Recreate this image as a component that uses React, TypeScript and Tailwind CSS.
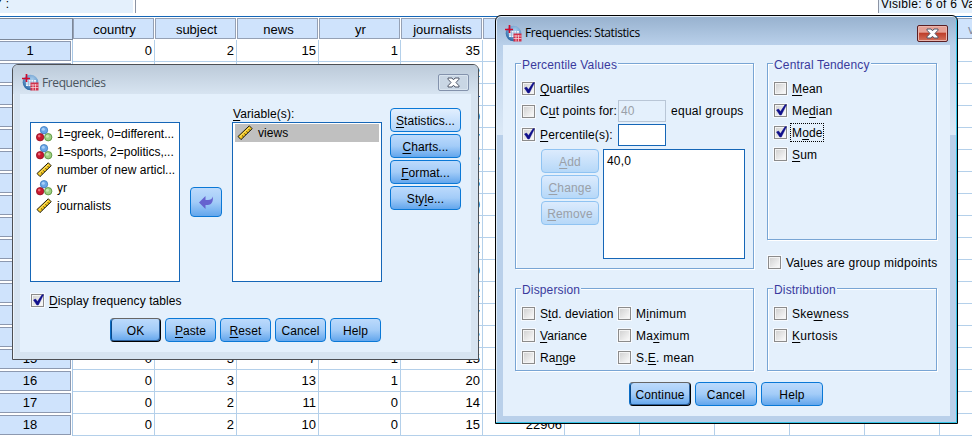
import React from "react";

/** Text with an "&" in front of its access key. */
function Mnemonic({ text }: { text: string }) {
  const at = text.indexOf("&");
  if (at < 0) return <>{text}</>;
  return (
    <>
      {text.slice(0, at)}
      <span className="underline decoration-1 underline-offset-2 [text-decoration-skip-ink:none]">{text[at + 1]}</span>
      {text.slice(at + 2)}
    </>
  );
}

function AppIcon() {
  return (
    <svg width="17" height="17" viewBox="0 0 17 17" className="block shrink-0">
      <defs>
        <radialGradient id="globe" cx="0.6" cy="0.3" r="0.75">
          <stop offset="0" stopColor="#a9cdec" />
          <stop offset="0.6" stopColor="#6598cb" />
          <stop offset="1" stopColor="#1f5d9c" />
        </radialGradient>
      </defs>
      <circle cx="8.500" cy="8.500" r="7.800" fill="url(#globe)" />
      <path d="M4 6h10v6H4z" fill="#eef5fc" />
      <path d="M4 8h10M4 10h10M6.500 6v6M9 6v6M11.500 6v6" stroke="#7fa6d0" strokeWidth="0.6" />
      <path d="M0 4.500h8M4.500 0v8" stroke="#cf0a2c" strokeWidth="1.700" />
      <path d="M8.500 8.500h8v8h-8z" fill="#d1304a" />
      <path d="M8.500 11h8M8.500 13.500h8M11 10v6.500M13.500 10v6.500" stroke="#fbe3e6" strokeWidth="0.7" />
    </svg>
  );
}

function NominalIcon() {
  return (
    <svg width="17" height="16" viewBox="0 0 17 16" className="block shrink-0">
      <circle cx="8" cy="4.2" r="3.7" fill="#6aa7e8" stroke="#3b78bd" strokeWidth="0.8" />
      <circle cx="7.3" cy="3.2" r="1.5" fill="#a9d0f8" />
      <circle cx="4.1" cy="11.2" r="3.7" fill="#c8192f" stroke="#8f1022" strokeWidth="0.8" />
      <circle cx="3.2" cy="10.1" r="1.3" fill="#ec6a78" />
      <circle cx="12.2" cy="11.2" r="3.7" fill="#9fd080" stroke="#4e8a35" strokeWidth="0.8" />
      <circle cx="11.4" cy="10.2" r="1.5" fill="#c9ecb2" />
    </svg>
  );
}

function ScaleIcon() {
  return (
    <svg width="17" height="16" viewBox="0 0 17 16" className="block shrink-0">
      <path d="M1 11.5 12.300 .8l2.900 2.900L4 14.600z" fill="#f5c61a" stroke="#1c1a10" strokeWidth="1" />
      <path d="M2.800 11.600l9.700-9.200" stroke="#fbe88a" strokeWidth="0.9" />
      <path d="M5.200 10.600l1.300 1.300M7.400 8.500l1.300 1.300M9.600 6.400l1.300 1.300M11.800 4.300l1.300 1.300" stroke="#1c1a10" strokeWidth="0.9" />
    </svg>
  );
}

function CloseButton({ active }: { active?: boolean }) {
  return (
    <div
      className={
        active
          ? "flex h-[17px] w-[31px] shrink-0 items-center justify-center rounded-[2px] border border-[#5a1f24] bg-linear-to-b from-[#e5a095] from-40% via-[#bf3f2b] via-50% to-[#d2705b] shadow-[inset_0_0_0_1px_#eab5ad]"
          : "flex h-[17px] w-[31px] shrink-0 items-center justify-center rounded-[2px] border border-[#8392ac] bg-[#c9d6e4] shadow-[inset_0_0_0_1px_#d9e4ef]"
      }
    >
      <svg width="13" height="11" viewBox="0 0 13 11" className="block">
        <path d="M1 1h4l1.500 1.800L8 1h4v1.200L9 5.500l3 3.300V10H8L6.500 8.200 5 10H1V8.800l3-3.300-3-3.300z" fill="#fff" stroke="#4f5769" strokeWidth="1" />
      </svg>
    </div>
  );
}

function PushButton({ label, width, variant = "normal" }: { label: string; width: string; variant?: "normal" | "light" | "focus" | "disabled" }) {
  const look = {
    normal: "border-[#0a78d6] bg-linear-to-b from-[#bcdafc] via-[#a3ccf8] to-[#62a6ec] text-black",
    light: "border-[#0a78d6] bg-linear-to-b from-[#e2effe] to-[#b2d5fa] text-black",
    focus:
      "border-t-[#666] border-l-[#0a6cc4] border-r-black border-b-black bg-linear-to-b from-[#bcdafc] via-[#a3ccf8] to-[#62a6ec] text-black shadow-[inset_-1px_-1px_0_#2b5f9a,inset_1px_0_0_#0a4a8a]",
    disabled: "border-[#8fc3f2] bg-linear-to-b from-[#dcebfd] to-[#b6d8f8] text-[#9aa0a8]",
  }[variant];
  return (
    <div className={`flex h-6 shrink-0 items-center justify-center rounded-[4px] border pt-px whitespace-pre ${width} ${look}`}>
      <span>
        <Mnemonic text={label} />
      </span>
    </div>
  );
}

function CheckBox({ label, checked, focused }: { label: string; checked?: boolean; focused?: boolean }) {
  return (
    <div className="flex h-[13px] items-center gap-[3px] whitespace-pre">
      <span className="size-[13px] shrink-0 border border-[#8b8b8b] bg-linear-to-br from-[#cfcfcf] to-[#fdfdfd] shadow-[inset_0_0_0_1px_#f4f4f4,0_0_0_1px_#f6faff]">
        {checked && (
          <svg width="12" height="12" viewBox="0 0 12 12" className="-mt-px block">
            <path d="M1.500 6 3.500 5l2 2.600L10 .8h1.500L6.300 11H4.800z" fill="#10108c" stroke="#10108c" strokeWidth="0.5" />
          </svg>
        )}
      </span>
      <span className={focused ? "h-[19px] border border-dotted border-black pl-px leading-[18px]" : "pl-0.5 leading-[18px]"}>
        <Mnemonic text={label} />
      </span>
    </div>
  );
}

function Group({ title, size, children }: { title: string; size: string; children: React.ReactNode }) {
  return (
    <section className={`shrink-0 border border-[#78a5d4] shadow-[1px_1px_0_#fff,inset_1px_1px_0_#fff] ${size}`}>
      <h2 className="-mt-[9px] ml-[5px] h-5 w-fit bg-[#e4f0fc] px-px leading-5 whitespace-pre text-[#3a3a9c]">{title}</h2>
      {children}
    </section>
  );
}

const columns = ["country", "subject", "news", "yr", "journalists", "views"];
const extraColumns = ["var", "var", "var", "var", "var", "var"];
const rows: string[][] = [
  ["0", "2", "15", "1", "35", "30112"],
  ["0", "1", "12", "1", "22", ""],
  ["0", "1", "14", "0", "24", ""],
  ["0", "3", "11", "1", "20", ""],
  ["0", "2", "10", "0", "17", ""],
  ["0", "2", "9", "1", "22", ""],
  ["0", "1", "8", "0", "26", ""],
  ["0", "3", "12", "1", "20", ""],
  ["0", "2", "13", "1", "17", ""],
  ["0", "1", "16", "0", "22", ""],
  ["0", "2", "10", "1", "20", ""],
  ["0", "3", "9", "0", "12", ""],
  ["0", "1", "8", "1", "17", ""],
  ["0", "2", "11", "0", "12", ""],
  ["0", "3", "7", "1", "15", ""],
  ["0", "3", "13", "1", "20", ""],
  ["0", "2", "11", "0", "14", ""],
  ["0", "2", "10", "0", "15", "22906"],
];

function DataSheet() {
  return (
    <div className="flex w-[1020px] flex-col text-[13px] tracking-normal">
      <div className="flex h-4 text-[12px] tracking-[0.3px]">
        <div className="h-[13px] w-[133px] bg-[#e4f0fc]">
          <span className="-ml-1.5 block leading-[8px] whitespace-pre">Y :</span>
        </div>
        <div className="ml-[2px] h-[13px] w-[743px] border-l border-[#8c94a4]" />
        <div className="h-[13px] w-[142px] border-l border-[#8c94a4] bg-[#e4f0fc] pl-0.5 leading-[8px] whitespace-pre">
          Visible: 6 of 6 Variables
        </div>
      </div>
      <div className="h-px bg-[#1566b7]" />
      <div className="flex h-[23px] pt-px">
        <div className="h-[22px] w-[73px] border-t border-r border-b border-[#7c8798] bg-[#cfe3fc]" />
        {columns.map((name) => (
          <div key={name} className="mr-px h-[21px] w-[81px] border border-[#95a1b5] bg-[#cfe3fc] pl-0.5 text-center leading-[22px]">
            {name}
          </div>
        ))}
        {extraColumns.map((name, i) => (
          <div key={i} className="mr-px h-[21px] w-[74px] border border-[#95a1b5] bg-[#cfe3fc] text-center leading-[22px] text-[#7f8aa0]">
            {name}
          </div>
        ))}
      </div>
      {rows.map((cells, r) => (
        <div key={r} className="flex h-[22px]">
          <div className="w-[73px] border-r border-[#a9c8e6] pt-px pr-px">
            <div className="h-5 w-[71px] border-t border-r border-b border-[#8d99b0] bg-[#cfe3fc] pr-[10px] text-center leading-[18px]">{r + 1}</div>
          </div>
          {cells.map((value, c) => (
            <div key={c} className="w-[82px] border-r border-b border-[#b4d0ea] pr-[2px] text-right leading-[22px]">
              {value}
            </div>
          ))}
          {extraColumns.map((_, c) => (
            <div key={c} className="w-[75px] border-r border-b border-[#b4d0ea]" />
          ))}
        </div>
      ))}
    </div>
  );
}

const sourceVariables = [
  { label: "1=greek, 0=different...", nominal: true },
  { label: "1=sports, 2=politics,...", nominal: true },
  { label: "number of new articl...", nominal: false },
  { label: "yr", nominal: true },
  { label: "journalists", nominal: false },
];

function FrequenciesDialog() {
  return (
    <div className="absolute top-16 left-3 flex h-[296px] w-[467px] flex-col rounded-t-[6px] border border-[#4c4f54] bg-[#d7e4f1] px-[7px] tracking-[0.08px] shadow-[inset_1px_1px_0_#eef4fa]">
      <div className="-mx-[7px] flex h-[29px] shrink-0 items-center rounded-t-[5px] bg-linear-to-b from-[#bccad9] to-[#d7e4f1] pt-1.5 pr-[9px] pl-[9px]">
        <AppIcon />
        <span className="ml-[3px] font-['Open_Sans',sans-serif] text-[12px] tracking-[-0.4px] text-[#4a545e]">Frequencies</span>
        <div className="ml-auto">
          <CloseButton />
        </div>
      </div>
      <div className="h-[258px] w-[451px] bg-[#e4f0fc] pt-[11px] pl-[10px]">
        <div className="flex">
          <div className="mt-[17px] flex h-40 w-[150px] flex-col border border-[#1566b7] bg-white pt-0.5 pl-[5px] tracking-normal">
            {sourceVariables.map((v) => (
              <div key={v.label} className="flex h-[18px] items-center gap-1 whitespace-pre">
                {v.nominal ? <NominalIcon /> : <ScaleIcon />}
                {v.label}
              </div>
            ))}
          </div>
          <div className="mt-[82px] ml-[10px] flex h-[30px] w-8 items-center justify-center rounded-[4px] border border-[#0a78d6] bg-linear-to-b from-[#bcdafc] via-[#a3ccf8] to-[#62a6ec]">
            <svg width="14" height="13" viewBox="0 0 14 13" className="block">
              <path d="M0 6.500 6.500 0v4H9c2.500 0 4-.8 4.800-3.500C14.500 6 12 9 9 9H6.500v4z" fill="#6663cf" />
            </svg>
          </div>
          <div className="ml-[10px] flex w-[150px] flex-col">
            <span className="h-[17px] pl-px leading-[18px]">
              <Mnemonic text="&Variable(s):" />
            </span>
            <div className="h-40 border border-[#1566b7] bg-white px-[2px] pt-px">
              <div className="flex h-[18px] items-center gap-[4px] bg-[#c0c0c0] pl-[2px]">
                <ScaleIcon />
                views
              </div>
            </div>
          </div>
          <div className="mt-[3px] ml-2 flex flex-col gap-0.5">
            <PushButton label="&Statistics..." width="w-[71px]" variant="light" />
            <PushButton label="&Charts..." width="w-[71px]" />
            <PushButton label="&Format..." width="w-[71px]" />
            <PushButton label="Sty&le..." width="w-[71px]" />
          </div>
        </div>
        <div className="mt-3 ml-px">
          <CheckBox label="&Display frequency tables" checked />
        </div>
        <div className="mt-[11px] ml-20 flex gap-1">
          <PushButton label="OK" width="w-[51px]" variant="focus" />
          <PushButton label="&Paste" width="w-[51px]" />
          <PushButton label="&Reset" width="w-[51px]" />
          <PushButton label="Cancel" width="w-[51px]" />
          <PushButton label="Help" width="w-[51px]" />
        </div>
      </div>
    </div>
  );
}

function StatisticsDialog() {
  return (
    <div className="absolute top-[15px] left-[495px] flex h-[409px] w-[463px] flex-col rounded-t-[6px] border border-black bg-[#b9d0ea] shadow-[inset_-1px_-1px_0_#35c5e8,inset_1px_1px_0_#e3eef8]">
      <div className="mx-px mt-px flex h-7 shrink-0 items-center rounded-t-[4px] bg-linear-to-b from-[#98b2cf] to-[#b9d0ea] pt-[7px] pr-[8px] pl-[8px]">
        <div className="-mt-[3px]">
          <AppIcon />
        </div>
        <span className="-mt-[3px] ml-[3px] font-['Open_Sans',sans-serif] text-[12px] tracking-[-0.38px] text-black">Frequencies: Statistics</span>
        <div className="-mt-[3px] ml-auto">
          <CloseButton active />
        </div>
      </div>
      <div className="mx-px mb-px flex h-[378px] bg-linear-to-b from-[#b9d0ea] to-[#dce9f6] bg-[length:100%_90px] bg-no-repeat px-[6px]">
        <div className="h-[371px] w-[447px] bg-[#e4f0fc] pt-[18px] pl-3">
          <div className="flex h-[225px] gap-[13px]">
            <Group title="Percentile Values" size="h-[206px] w-[239px]">
              <div className="pt-[7px] pl-1.5">
                <CheckBox label="&Quartiles" checked />
                <div className="mt-[5px] flex h-[22px] items-center">
                  <div className="w-24">
                    <CheckBox label="C&ut points for:" />
                  </div>
                  <div className="h-[22px] w-12 border border-[#b9c6d6] pl-[2px] leading-[21px] text-[#9aa0a8]">40</div>
                  <span className="ml-[5px] tracking-[0.27px] whitespace-pre">equal groups</span>
                </div>
                <div className="mt-0.5 flex h-[22px] items-center">
                  <div className="-mt-px w-24">
                    <CheckBox label="&Percentile(s):" checked />
                  </div>
                  <div className="h-[22px] w-12 border border-[#1566b7] bg-white" />
                </div>
                <div className="mt-[3px] ml-[19px] flex gap-1">
                  <div className="flex flex-col gap-0.5">
                    <PushButton label="&Add" width="w-[58px]" variant="disabled" />
                    <PushButton label="&Change" width="w-[58px]" variant="disabled" />
                    <PushButton label="&Remove" width="w-[58px]" variant="disabled" />
                  </div>
                  <div className="h-[110px] w-[142px] border border-[#1566b7] bg-white pl-[3px] leading-[23px]">40,0</div>
                </div>
              </div>
            </Group>
            <div>
              <Group title="Central Tendency" size="h-[177px] w-[170px]">
                <div className="flex flex-col gap-[9px] pt-[7px] pl-1.5">
                  <CheckBox label="&Mean" />
                  <CheckBox label="Me&dian" checked />
                  <CheckBox label="M&ode" checked focused />
                  <CheckBox label="&Sum" />
                </div>
              </Group>
              <div className="mt-4 ml-px tracking-[0.24px]">
                <CheckBox label="Va&lues are group midpoints" />
              </div>
            </div>
          </div>
          <div className="flex gap-[13px]">
            <Group title="Dispersion" size="h-[83px] w-[239px]">
              <div className="flex pt-[7px] pl-1.5">
                <div className="flex w-24 flex-col gap-[9px] tracking-[0.05px]">
                  <CheckBox label="S&td. deviation" />
                  <CheckBox label="&Variance" />
                  <CheckBox label="Ra&nge" />
                </div>
                <div className="flex flex-col gap-[9px] tracking-[0.25px]">
                  <CheckBox label="M&inimum" />
                  <CheckBox label="Ma&ximum" />
                  <CheckBox label="S.&E. mean" />
                </div>
              </div>
            </Group>
            <Group title="Distribution" size="h-[83px] w-[170px]">
              <div className="flex flex-col gap-[9px] pt-[7px] pl-1.5 tracking-[0.3px]">
                <CheckBox label="Ske&wness" />
                <CheckBox label="&Kurtosis" />
              </div>
            </Group>
          </div>
          <div className="mt-[11px] ml-[114px] flex gap-1">
            <PushButton label="Continue" width="w-[62px]" variant="focus" />
            <PushButton label="Cancel" width="w-[62px]" />
            <PushButton label="Help" width="w-[62px]" />
          </div>
        </div>
      </div>
    </div>
  );
}

export default function App() {
  return (
    <main className="relative h-[436px] w-[972px] overflow-hidden bg-white font-['Liberation_Sans',Arial,sans-serif] text-[12px] tracking-[0.15px] text-black">
      <DataSheet />
      <FrequenciesDialog />
      <StatisticsDialog />
    </main>
  );
}
